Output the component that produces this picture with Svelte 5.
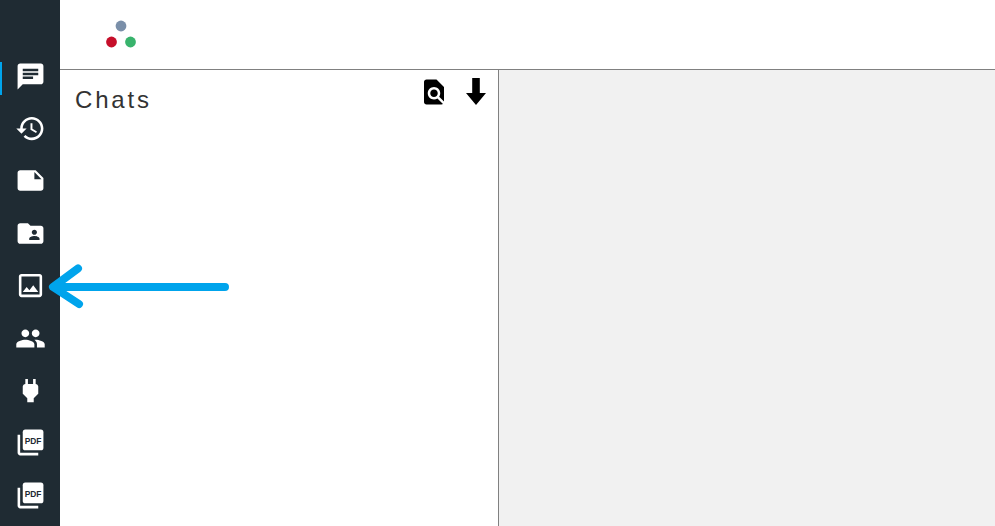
<script>
  const icons = [
    { d: 'M20 2H4c-1.1 0-1.99.9-1.99 2L2 22l4-4h14c1.1 0 2-.9 2-2V4c0-1.1-.9-2-2-2zM6 9h12v2H6V9zm8 5H6v-2h8v2zm4-6H6V6h12v2z', active: true },
    { d: 'M13 3c-4.97 0-9 4.03-9 9H1l3.89 3.89.07.14L9 12H6c0-3.87 3.13-7 7-7s7 3.13 7 7-3.13 7-7 7c-1.93 0-3.68-.79-4.94-2.06l-1.42 1.42C8.27 19.99 10.51 21 13 21c4.97 0 9-4.03 9-9s-4.03-9-9-9zm-1 5v5l4.28 2.54.72-1.21-3.5-2.08V8H12z' },
    { d: 'M22 10l-6-6H4c-1.1 0-2 .9-2 2v12.01c0 1.1.9 1.99 2 1.99l16-.01c1.1 0 2-.89 2-1.99v-8zm-7-4.5l5.5 5.5H15V5.5z' },
    { d: 'M20 6h-8l-2-2H4c-1.1 0-1.99.9-1.99 2L2 18c0 1.1.9 2 2 2h16c1.1 0 2-.9 2-2V8c0-1.1-.9-2-2-2zm-5 3c1.1 0 2 .9 2 2s-.9 2-2 2-2-.9-2-2 .9-2 2-2zm4 8h-8v-1c0-1.33 2.67-2 4-2s4 .67 4 2v1z' },
    { d: 'M19 5v14H5V5h14m0-2H5c-1.1 0-2 .9-2 2v14c0 1.1.9 2 2 2h14c1.1 0 2-.9 2-2V5c0-1.1-.9-2-2-2zm-4.86 8.86l-3 3.87L9 13.14 6 17h12l-3.86-5.14z' },
    { d: 'M16 11c1.66 0 2.99-1.34 2.99-3S17.66 5 16 5c-1.66 0-3 1.34-3 3s1.34 3 3 3zm-8 0c1.66 0 2.99-1.34 2.99-3S9.66 5 8 5C6.34 5 5 6.34 5 8s1.34 3 3 3zm0 2c-2.33 0-7 1.17-7 3.5V19h14v-2.5c0-2.33-4.67-3.5-7-3.5zm8 0c-.29 0-.62.02-.97.05 1.16.84 1.97 1.97 1.97 3.45V19h6v-2.5c0-2.33-4.67-3.5-7-3.5z' },
    { d: 'M16.01 7L16 3h-2v4h-4V3H8v4h-.01C7 6.99 6 7.99 6 8.99v5.49L9.5 18v3h5v-3l3.5-3.51v-5.5c0-1-1-2-1.99-1.99z' },
    { pdf: true },
    { pdf: true }
  ];
</script>

<div class="app">
  <nav class="rail">
    {#each icons as icon}
      <div class="item" class:active={icon.active}>
        <svg class="nav-icon" viewBox="0 0 24 24" aria-hidden="true">
          {#if icon.pdf}
            <rect x="6" y="2" width="16" height="16" rx="2" fill="#fff" />
            <path d="M4 6H2v14c0 1.1.9 2 2 2h14v-2H4V6z" fill="#fff" />
            <text x="14" y="13" text-anchor="middle" textLength="13" lengthAdjust="spacingAndGlyphs" class="pdf">PDF</text>
          {:else}
            <path d={icon.d} fill="#fff" />
          {/if}
        </svg>
      </div>
    {/each}
  </nav>

  <div class="main">
    <header class="top">
      <svg class="logo" viewBox="0 0 32 28" aria-hidden="true">
        <circle cx="16" cy="6" r="5.4" fill="#7a8fa9" />
        <circle cx="6.5" cy="22" r="5.4" fill="#c60f2a" />
        <circle cx="25.5" cy="22" r="5.4" fill="#38b36c" />
      </svg>
    </header>
    <div class="body">
      <section class="list">
        <div class="list-head">
          <h1>Chats</h1>
          <div class="tools">
            <svg class="find" viewBox="0 0 24 24" aria-hidden="true">
              <path d="M20 19.59V8l-6-6H6c-1.1 0-1.99.9-1.99 2L4 20c0 1.1.89 2 1.99 2H18c.45 0 .85-.15 1.19-.4l-4.43-4.43c-.8.52-1.74.83-2.76.83-2.76 0-5-2.24-5-5s2.24-5 5-5 5 2.24 5 5c0 1.02-.31 1.96-.83 2.76L20 19.59zM9 13c0 1.66 1.34 3 3 3s3-1.34 3-3-1.34-3-3-3-3 1.34-3 3z" />
            </svg>
            <svg class="down" viewBox="0 0 20 27" aria-hidden="true">
              <path d="M6.200 0h7.600v15H20L10 27 0 15h6.200z" />
            </svg>
          </div>
        </div>
      </section>
      <section class="detail"></section>
    </div>
  </div>

  <svg class="callout" viewBox="0 0 995 526" aria-hidden="true">
    <path d="M225 287H54M78 268.500L53 287l26 17" fill="none" stroke="#00a4ec" stroke-width="8" stroke-linecap="round" stroke-linejoin="round" />
  </svg>
</div>

<style>
  :global(body) {
    margin: 0;
    background: #fff;
  }
  .app {
    position: relative;
    display: flex;
    width: 995px;
    height: 526px;
    overflow: hidden;
    font-family: "Liberation Sans", Arial, sans-serif;
  }
  .rail {
    flex: 0 0 60px;
    box-sizing: border-box;
    padding-top: 50px;
    background: #1f2b33;
  }
  .item {
    position: relative;
    display: flex;
    align-items: center;
    justify-content: center;
    height: 52.4px;
    padding-left: 1px;
    box-sizing: border-box;
  }
  .item.active::before {
    content: "";
    position: absolute;
    left: 0;
    top: 12px;
    width: 2px;
    height: 33px;
    background: #00a4ec;
  }
  .nav-icon {
    width: 31px;
    height: 31px;
  }
  .pdf {
    font: 700 7px "Liberation Sans", Arial, sans-serif;
    fill: #1f2b33;
  }
  .main {
    flex: 1;
    display: flex;
    flex-direction: column;
    min-width: 0;
  }
  .top {
    flex: 0 0 70px;
    box-sizing: border-box;
    border-bottom: 1px solid #808080;
    padding: 20px 0 0 45px;
  }
  .logo {
    display: block;
    width: 32px;
    height: 28px;
  }
  .body {
    flex: 1;
    display: flex;
    min-height: 0;
  }
  .list {
    flex: 0 0 439px;
    box-sizing: border-box;
    border-right: 1px solid #808080;
  }
  .list-head {
    display: flex;
    justify-content: space-between;
    align-items: flex-start;
    padding: 7px 12px 0 15px;
  }
  h1 {
    margin: 9px 0 0;
    font-size: 24px;
    line-height: 28px;
    font-weight: 400;
    letter-spacing: 2.8px;
    color: #333;
  }
  .tools {
    display: flex;
    align-items: flex-start;
    gap: 17px;
  }
  .find {
    width: 30px;
    height: 30px;
  }
  .down {
    width: 20px;
    height: 27px;
    margin-top: 1px;
  }
  .detail {
    flex: 1;
    background: #f1f1f1;
  }
  .callout {
    position: absolute;
    inset: 0;
    width: 995px;
    height: 526px;
    pointer-events: none;
  }
</style>
